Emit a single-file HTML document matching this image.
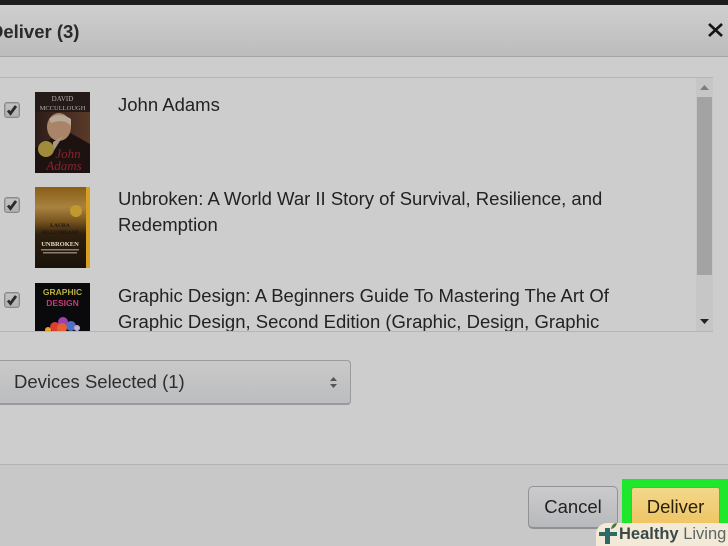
<!DOCTYPE html>
<html><head><meta charset="utf-8">
<style>
html,body{margin:0;padding:0;width:728px;height:546px;overflow:hidden}
#w{position:relative;width:728px;height:546px;overflow:hidden;background:#cdcdcd;font-family:"Liberation Sans",sans-serif;color:#1a1a1a}
.a{position:absolute}
.t{position:absolute;font-size:18.5px;line-height:26px;white-space:nowrap;color:#222}
.cb{position:absolute;left:4px;width:16px;height:16px;border:1px solid #8a8a8a;border-radius:3px;background:linear-gradient(#c4c4c4,#b0b0b0);box-sizing:border-box;box-shadow:inset 0 0 0 1px #a8a8a8}
.cb svg{position:absolute;left:0;top:0}
</style></head><body><div id="w">
<div class="a" style="left:0;top:0;width:728px;height:5px;background:#1d1d1d"></div>
<div class="a" style="left:0;top:5px;width:728px;height:52px;background:linear-gradient(#cfcfcf,#bcbcbc);border-bottom:1px solid #a6a6a6;box-sizing:border-box"></div>
<div class="a" style="left:-10px;top:20px;font-size:18.500px;line-height:24px;font-weight:bold;color:#2a2a2a">Deliver (3)</div>
<svg class="a" style="left:704px;top:20px" width="22" height="20" viewBox="0 0 22 20"><path d="M5 4L18 16M18 4L5 16" stroke="#151515" stroke-width="2.600" fill="none"/></svg>

<div class="a" style="left:0;top:77px;width:713px;height:1px;background:#b5b5b5"></div>
<div class="a" style="left:0;top:331px;width:713px;height:1px;background:#b5b5b5"></div>

<div class="a" style="left:696px;top:78px;width:17px;height:253px;background:#c6c6c6"></div>
<div class="a" style="left:697px;top:97px;width:15px;height:178px;background:#a3a3a3"></div>
<svg class="a" style="left:696px;top:78px" width="17" height="18"><path d="M4 12L8.500 7L13 12Z" fill="#7d7d7d"/></svg>
<svg class="a" style="left:696px;top:312px" width="17" height="18"><path d="M4 7L13 7L8.500 12Z" fill="#222"/></svg>

<div class="cb" style="top:102px"><svg width="14" height="14" viewBox="0 0 14 14"><path d="M3 7.500L5.500 10.500L11 3" stroke="#2a2a2a" stroke-width="2.800" fill="none"/></svg></div>
<div class="cb" style="top:197px"><svg width="14" height="14" viewBox="0 0 14 14"><path d="M3 7.500L5.500 10.500L11 3" stroke="#2a2a2a" stroke-width="2.800" fill="none"/></svg></div>
<div class="cb" style="top:292px"><svg width="14" height="14" viewBox="0 0 14 14"><path d="M3 7.500L5.500 10.500L11 3" stroke="#2a2a2a" stroke-width="2.800" fill="none"/></svg></div>

<!-- John Adams cover -->
<svg class="a" style="left:35px;top:92px" width="55" height="81" viewBox="0 0 55 81">
<defs><linearGradient id="b1" x1="0" y1="0" x2="1" y2="0"><stop offset="0" stop-color="#2c1c18"/><stop offset="1" stop-color="#5a3a28"/></linearGradient></defs>
<rect width="55" height="81" fill="url(#b1)"/>
<rect width="55" height="20" fill="#241a18"/>
<path d="M0 81V56L14 48L30 38L55 52V81Z" fill="#1c1310"/>
<ellipse cx="24" cy="35" rx="12" ry="14" fill="#a98468"/>
<path d="M14 27Q24 19 36 27L36 34Q30 26 16 31Z" fill="#b8a898"/>
<path d="M18 50L28 44L18 60Z" fill="#a89880"/>
<circle cx="11" cy="57" r="8" fill="#a08a3c"/>
<text x="27.500" y="9" font-size="7" text-anchor="middle" fill="#b9aca0" font-family="Liberation Serif">DAVID</text>
<text x="27.500" y="18" font-size="6.500" text-anchor="middle" fill="#b9aca0" font-family="Liberation Serif">MCCULLOUGH</text>
<text x="33" y="66" font-size="13" font-style="italic" text-anchor="middle" fill="#8c2030" font-family="Liberation Serif">John</text>
<text x="29" y="78" font-size="13" font-style="italic" text-anchor="middle" fill="#8c2030" font-family="Liberation Serif">Adams</text>
</svg>

<!-- Unbroken cover -->
<svg class="a" style="left:35px;top:187px" width="55" height="81" viewBox="0 0 55 81">
<defs><linearGradient id="b2" x1="0" y1="0" x2="0" y2="1"><stop offset="0" stop-color="#8a5e14"/><stop offset=".25" stop-color="#a88240"/><stop offset=".42" stop-color="#7a5620"/><stop offset=".58" stop-color="#2e1f0e"/><stop offset="1" stop-color="#1a120a"/></linearGradient></defs>
<rect width="51" height="81" fill="url(#b2)"/>
<rect x="51" width="4" height="81" fill="#d8a020"/>
<circle cx="41" cy="24" r="6" fill="#c09a2c"/>
<text x="25" y="40" font-size="5.500" text-anchor="middle" fill="#1e1408" font-family="Liberation Serif" font-weight="bold">LAURA</text>
<text x="25" y="47" font-size="5" text-anchor="middle" fill="#1e1408" font-family="Liberation Serif" font-weight="bold">HILLENBRAND</text>
<text x="25" y="59" font-size="6.500" text-anchor="middle" fill="#e0d8c8" font-family="Liberation Serif" font-weight="bold">UNBROKEN</text>
<rect x="6" y="62" width="38" height="1.500" fill="#8a8070"/>
<rect x="8" y="65" width="34" height="1.500" fill="#8a8070"/>
</svg>

<!-- Graphic Design cover -->
<svg class="a" style="left:35px;top:283px" width="55" height="48" viewBox="0 0 55 48">
<rect width="55" height="48" fill="#0a0a0c"/>
<text x="27.500" y="12" font-size="8.500" font-weight="bold" text-anchor="middle" fill="#b8b040" font-family="Liberation Sans">GRAPHIC</text>
<text x="27.500" y="23" font-size="8.500" font-weight="bold" text-anchor="middle" fill="#c83a70" font-family="Liberation Sans">DESIGN</text>
<circle cx="20" cy="44" r="5" fill="#d84030"/><circle cx="28" cy="39" r="5" fill="#a040b0"/><circle cx="36" cy="43" r="5" fill="#5070c8"/><circle cx="13" cy="47" r="3" fill="#e8a030"/><circle cx="27" cy="45" r="5" fill="#e86030"/><circle cx="42" cy="45" r="3" fill="#c0b0d0"/>
</svg>

<div class="t" style="left:118px;top:92px">John Adams</div>
<div class="t" style="left:118px;top:186px">Unbroken: A World War II Story of Survival, Resilience, and</div>
<div class="t" style="left:118px;top:212px">Redemption</div>
<div class="t" style="left:118px;top:283px">Graphic Design: A Beginners Guide To Mastering The Art Of</div>
<div class="t" style="left:118px;top:309px;height:22px;overflow:hidden">Graphic Design, Second Edition (Graphic, Design, Graphic</div>

<!-- select -->
<div class="a" style="left:-10px;top:360px;width:361px;height:45px;box-sizing:border-box;border:1px solid #9b9b9b;border-bottom:2px solid #9a9a9e;border-radius:4px;background:linear-gradient(#c9c9c9,#bcbdc0)"></div>
<div class="t" style="left:14px;top:369px;color:#2e2e2e">Devices Selected (1)</div>
<svg class="a" style="left:328px;top:375px" width="11" height="15"><path d="M2 6L5.500 2L9 6ZM2 9L9 9L5.500 13Z" fill="#555"/></svg>

<!-- footer -->
<div class="a" style="left:0;top:464px;width:728px;height:82px;background:#c8c8c8;border-top:1px solid #b4b4b4;box-sizing:border-box"></div>
<div class="a" style="left:528px;top:486px;width:90px;height:43px;box-sizing:border-box;border:1px solid #929292;border-bottom:2px solid #909090;border-radius:5px;background:linear-gradient(#cbcbcd,#b8b9bc)"></div>
<div class="a" style="left:528px;top:495px;width:90px;text-align:center;font-size:18.500px;line-height:24px;color:#222">Cancel</div>
<div class="a" style="left:622px;top:479px;width:106px;height:67px;background:#1fe82c"></div>
<div class="a" style="left:631px;top:487px;width:89px;height:59px;box-sizing:border-box;border:1px solid #b08c40;border-radius:3px;background:linear-gradient(#f3d88a,#edb94f)"></div>
<div class="a" style="left:631px;top:495px;width:89px;text-align:center;font-size:18.500px;line-height:24px;color:#2a2008">Deliver</div>

<!-- watermark -->
<div class="a" style="left:596px;top:523px;width:132px;height:23px;background:#f2ead6;border-radius:11px 0 0 0"></div>
<svg class="a" style="left:597px;top:522px" width="24" height="24" viewBox="0 0 24 24"><path d="M8 6H13V10H20V14H13V22H8V14H2V10H8Z" fill="#2b6a68"/><path d="M14 7Q15 1 20 1Q19 6 14 7Z" fill="#4d7a3c"/></svg>
<div class="a" style="left:619px;top:524px;font-size:16.500px;line-height:20px;white-space:nowrap;font-weight:bold;color:#3a4a48">Healthy <span style="font-weight:normal;color:#5a6664">Living</span></div>
</div></body></html>
